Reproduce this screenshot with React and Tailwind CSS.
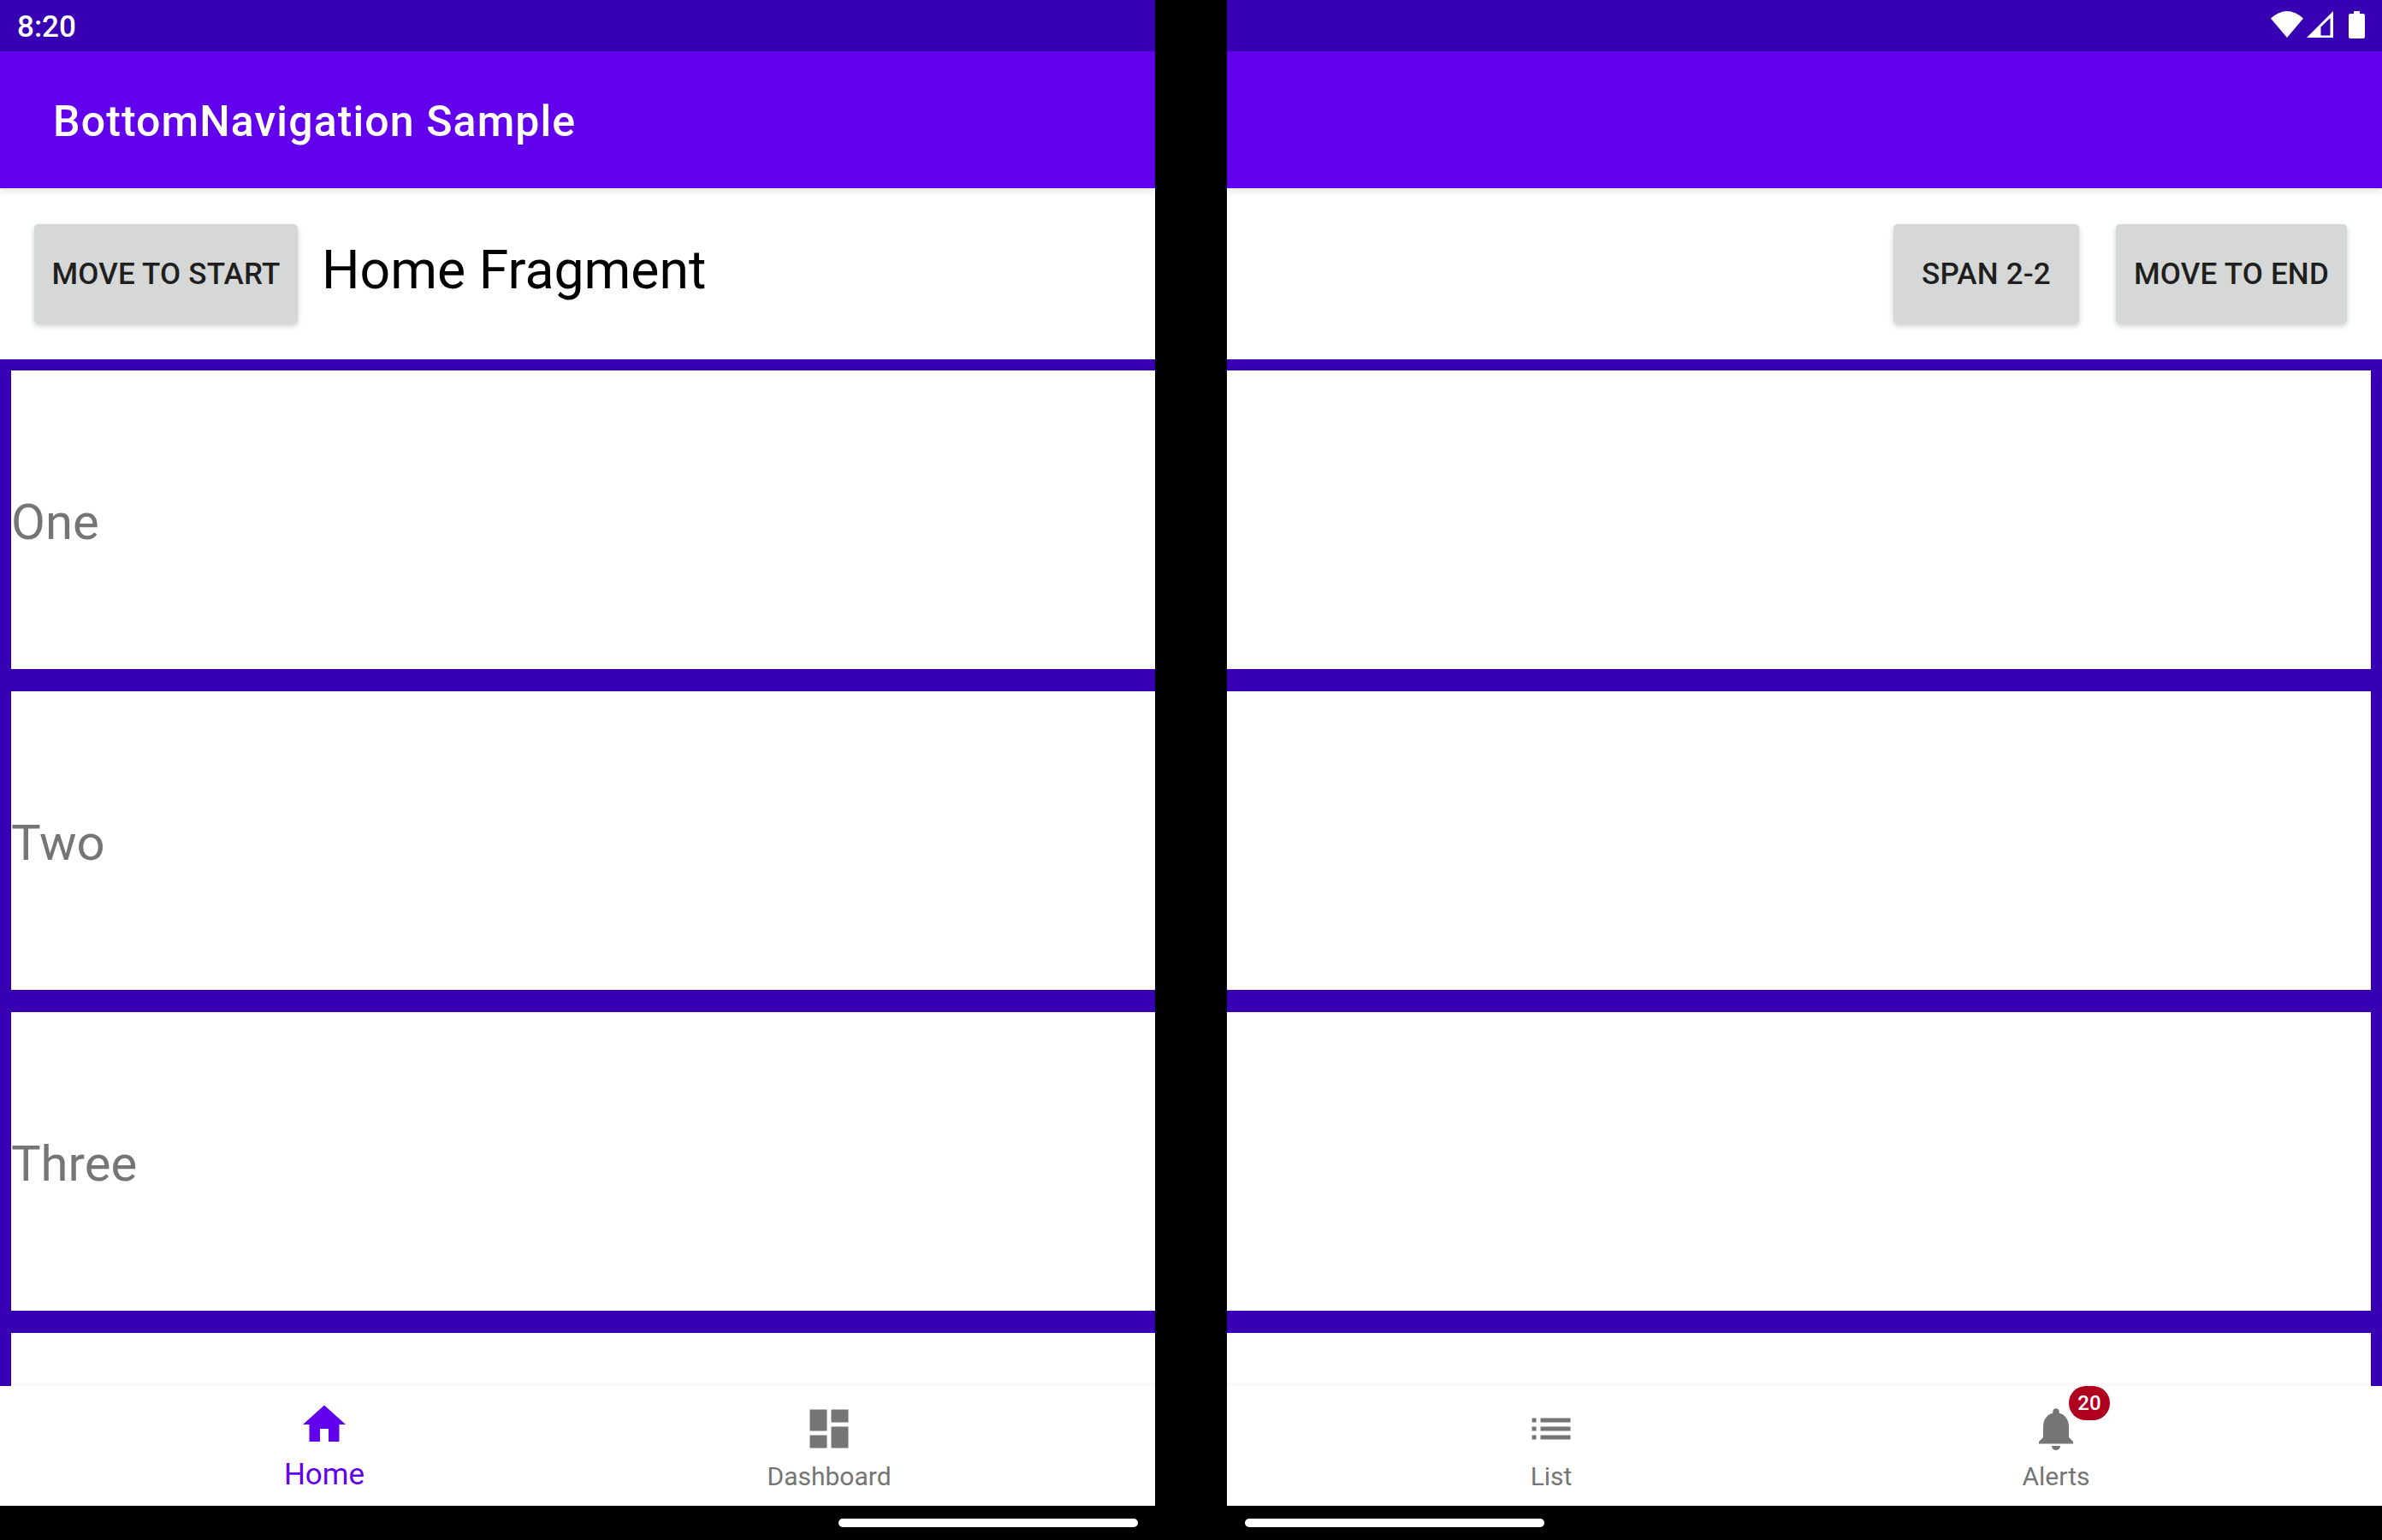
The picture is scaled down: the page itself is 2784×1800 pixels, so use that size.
import React from 'react';

const HomeIcon = () => (
  <svg viewBox="0 0 24 24" className="w-[60px] h-[60px] fill-[#6200ee]">
    <path d="M10 20v-6h4v6h5v-8h3L12 3 2 12h3v8z" />
  </svg>
);

const DashboardIcon = () => (
  <svg viewBox="0 0 24 24" className="w-[60px] h-[60px] fill-[#757575]">
    <path d="M3 13h8V3H3v10zm0 8h8v-6H3v6zm10 0h8V11h-8v10zm0-18v6h8V3h-8z" />
  </svg>
);

const ListIcon = () => (
  <svg viewBox="0 0 24 24" className="w-[60px] h-[60px] fill-[#757575]">
    <path d="M3 13h2v-2H3v2zm0 4h2v-2H3v2zm0-8h2V7H3v2zm4 4h14v-2H7v2zm0 4h14v-2H7v2zM7 7v2h14V7H7z" />
  </svg>
);

const BellIcon = () => (
  <svg viewBox="0 0 24 24" className="w-[60px] h-[60px] fill-[#757575]">
    <path d="M12 22c1.1 0 2-.9 2-2h-4c0 1.1.89 2 2 2zm6-6v-5c0-3.07-1.64-5.64-4.5-6.32V4c0-.83-.67-1.5-1.5-1.5s-1.5.67-1.5 1.5v.68C7.63 5.36 6 7.92 6 11v5l-2 2v1h16v-1l-2-2z" />
  </svg>
);

function StatusIcons() {
  return (
    <div className="flex items-start pt-[13px] pr-[20px]">
      <svg viewBox="0 0 38 31" className="w-[38px] h-[31px] fill-white">
        <path d="M19 31 L0 8.5 Q19 -8.5 38 8.5 Z" />
      </svg>
      <svg viewBox="0 0 31 31" className="w-[31px] h-[31px] ml-[4px] fill-white">
        <path fillRule="evenodd" d="M0 31 L31 0 V31 Z M16.5 28.5 H27.5 V8 L16.5 18.5 Z" />
      </svg>
      <svg viewBox="0 0 19 32" className="w-[19px] h-[32px] ml-[18px] fill-white">
        <path d="M6 0h7v3h4a2 2 0 0 1 2 2v25a2 2 0 0 1-2 2H2a2 2 0 0 1-2-2V5a2 2 0 0 1 2-2h4z" />
      </svg>
    </div>
  );
}

function Button({ width, children }) {
  return (
    <button className={`${width} h-[116px] shrink-0 pt-[3px] rounded-[5px] bg-[#d6d7d7] text-[#1f1f1f] text-[35px] font-[480] tracking-[0.2px] uppercase shadow-[0_3px_6px_rgba(0,0,0,0.2)]`}>
      {children}
    </button>
  );
}

function ListRows({ labels }) {
  return (
    <div className="flex flex-col gap-[26px] pt-[13px]">
      {labels.map((label, index) => (
        <div key={index} className="h-[349px] shrink-0 pt-[6px] bg-white flex items-center text-[58px] text-[#757575]">
          {label}
        </div>
      ))}
    </div>
  );
}

function NavItem({ icon: Icon, label, active, badge }) {
  return (
    <div className="flex-1 flex flex-col items-center">
      <div className={`relative ${active ? 'mt-[15px]' : 'mt-[20px]'}`}>
        <Icon />
        {badge && (
          <span className="absolute left-[45px] top-[-20px] w-[48px] h-[40px] rounded-full bg-[#b00020] text-white text-[24px] font-medium flex items-center justify-center">
            {badge}
          </span>
        )}
      </div>
      {active ? (
        <span className="mt-[9px] text-[35px] leading-[40px] text-[#6200ee]">{label}</span>
      ) : (
        <span className="mt-[8px] text-[30px] leading-[35px] text-[#757575]">{label}</span>
      )}
    </div>
  );
}

export default function App() {
  return (
    <div className="flex w-[2784px] h-[1800px] bg-black font-['Roboto',sans-serif] overflow-hidden">
      {/* left screen */}
      <div className="w-[1350px] shrink-0 flex flex-col">
        <div className="h-[60px] bg-[#3700b3] flex items-center pl-[20px] pt-[5px] text-white text-[35px] font-medium">8:20</div>
        <div className="relative z-10 h-[160px] bg-[#6200ee] flex items-center pl-[62px] pt-[5px] text-white text-[50px] font-medium tracking-[1.1px] shadow-[0_3px_8px_rgba(0,0,0,0.12)]">
          BottomNavigation Sample
        </div>
        <div className="h-[200px] bg-white flex items-center pl-[40px]">
          <Button width="w-[308px]">Move to start</Button>
          <span className="ml-[28px] mb-[8px] text-[62.5px] text-black">Home Fragment</span>
        </div>
        <div className="flex-1 min-h-0 overflow-hidden bg-[#3700b3] pl-[13px]">
          <ListRows labels={['One', 'Two', 'Three', '']} />
        </div>
        <div className="relative z-10 h-[140px] bg-white flex pl-[84px] pr-[86px] shadow-[0_-2px_4px_rgba(0,0,0,0.04)]">
          <NavItem icon={HomeIcon} label="Home" active />
          <NavItem icon={DashboardIcon} label="Dashboard" />
        </div>
        <div className="h-[40px] pt-[15px] pl-[980px]">
          <div className="w-[350px] h-[10px] rounded-full bg-white" />
        </div>
      </div>

      {/* hinge */}
      <div className="w-[84px] shrink-0 bg-black" />

      {/* right screen */}
      <div className="flex-1 flex flex-col">
        <div className="h-[60px] bg-[#3700b3] flex justify-end">
          <StatusIcons />
        </div>
        <div className="relative z-10 h-[160px] bg-[#6200ee] shadow-[0_3px_8px_rgba(0,0,0,0.12)]" />
        <div className="h-[200px] bg-white flex items-center justify-end gap-[43px] pr-[41px]">
          <Button width="w-[217px]">Span 2-2</Button>
          <Button width="w-[270px]">Move to end</Button>
        </div>
        <div className="flex-1 min-h-0 overflow-hidden bg-[#3700b3] pr-[13px]">
          <ListRows labels={['', '', '', '']} />
        </div>
        <div className="relative z-10 h-[140px] bg-white flex pl-[84px] pr-[86px] shadow-[0_-2px_4px_rgba(0,0,0,0.04)]">
          <NavItem icon={ListIcon} label="List" />
          <NavItem icon={BellIcon} label="Alerts" badge="20" />
        </div>
        <div className="h-[40px] pt-[15px] pl-[21px]">
          <div className="w-[350px] h-[10px] rounded-full bg-white" />
        </div>
      </div>
    </div>
  );
}
